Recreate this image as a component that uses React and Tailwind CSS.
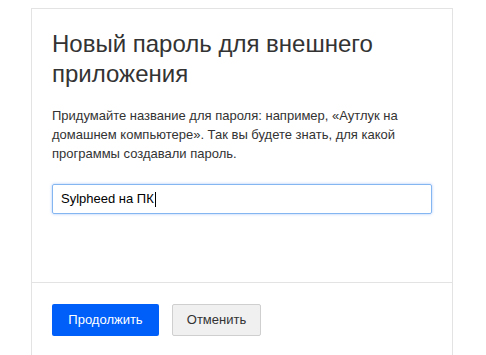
export default function App() {
  return (
    <div className="min-h-screen bg-white pt-2 font-['Liberation_Sans',Arial,sans-serif] text-[#333]">
      <div className="ml-[31px] w-[422px] border border-[#e3e3e3] bg-white">
        {/* Тело */}
        <div className="px-5 pt-5 pb-[68px]">
          <h1 className="text-[24px] leading-[30px] font-normal text-[#333]">
            Новый пароль для внешнего приложения
          </h1>
          <p className="mt-[17px] text-[13px] leading-[19px] text-[#333]">
            Придумайте название для пароля: например, «Аутлук на домашнем компьютере». Так вы будете знать, для какой программы создавали пароль.
          </p>
          <div className="mt-[21px] flex h-[30px] items-center rounded-[2px] border border-[#84b6f1] px-2 text-[13px] text-black shadow-[0_0_3px_rgba(0,95,249,0.35)]">
            <span>Sylpheed на ПК</span>
            <span className="ml-px inline-block h-[15px] w-px bg-black" />
          </div>
        </div>

        {/* Кнопки */}
        <div className="flex gap-[13px] border-t border-[#e3e3e3] px-5 pt-[21px] pb-5">
          <button className="h-8 w-[107px] rounded-[2px] bg-[#005ff9] text-[13px] text-white">
            Продолжить
          </button>
          <button className="h-8 w-[89px] rounded-[2px] border border-[#cfcfcf] bg-[#f0f0f0] text-[13px] text-[#333]">
            Отменить
          </button>
        </div>
      </div>
    </div>
  );
}
